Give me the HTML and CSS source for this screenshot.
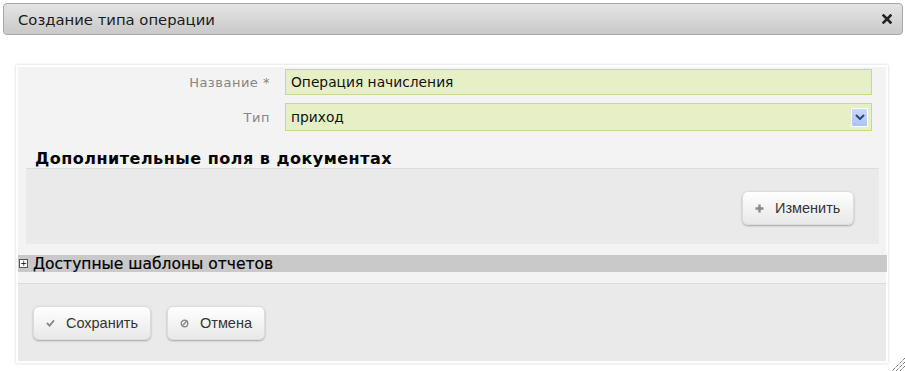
FILE: index.html
```html
<!DOCTYPE html>
<html lang="ru">
<head>
<meta charset="utf-8">
<link rel="stylesheet" href="styles.css">
</head>
<body>
<div class="titlebar">
  <span class="title">Создание типа операции</span>
  <svg class="close" width="10" height="10" viewBox="0 0 10 10"><path d="M1.5 1.5 L8.5 8.5 M8.5 1.5 L1.5 8.5" stroke="#222" stroke-width="2.6" stroke-linecap="square"/></svg>
</div>
<div class="panel">
  <div class="row row1">
    <label class="lbl">Название *</label>
    <div class="field">Операция начисления</div>
  </div>
  <div class="row row2">
    <label class="lbl">Тип</label>
    <div class="field select">приход
      <span class="arrow"><svg width="10" height="6" viewBox="0 0 10 6"><path d="M1 1 L5 5 L9 1" stroke="#33466b" stroke-width="2" fill="none"/></svg></span>
    </div>
  </div>
  <h2 class="heading">Дополнительные поля в документах</h2>
  <div class="extra">
    <button class="btn"><svg class="ico" width="9" height="9" viewBox="0 0 9 9"><path d="M4.5 0.5 V8.5 M0.5 4.5 H8.5" stroke="#8a8a8a" stroke-width="2.4"/></svg>Изменить</button>
  </div>
  <div class="bar"><span class="pbox">+</span>Доступные шаблоны отчетов</div>
  <div class="footer">
    <button class="btn"><svg class="ico" width="10" height="8" viewBox="0 0 10 8"><path d="M1 4 L4 7 L9 1" stroke="#888" stroke-width="2" fill="none"/></svg>Сохранить</button>
    <button class="btn"><svg class="ico" width="9" height="9" viewBox="0 0 9 9"><circle cx="4.5" cy="4.5" r="3.3" stroke="#888" stroke-width="1.4" fill="none"/><path d="M2.3 6.7 L6.7 2.3" stroke="#888" stroke-width="1.4"/></svg>Отмена</button>
  </div>
</div>
<svg class="grip" width="14" height="14" viewBox="0 0 14 14"><path d="M14 1 L1 14 M14 5 L5 14 M14 9 L9 14" stroke="#333" stroke-width="1" stroke-dasharray="1 1"/></svg>
</body>
</html>
```
FILE: styles.css
```css
html, body { margin: 0; padding: 0; background: #fff; }
body {
  font-family: "DejaVu Sans", Verdana, sans-serif;
  font-size: 13px;
  color: #000;
  width: 905px;
  height: 371px;
  position: relative;
  overflow: hidden;
}
.titlebar {
  margin: 3px 2px 0 3px;
  height: 30px;
  border: 1px solid #a8a8a8;
  border-radius: 4px;
  background: linear-gradient(#e4e4e4, #c9c9c9);
  display: flex;
  align-items: center;
  justify-content: space-between;
  padding: 0 10px 0 14px;
}
.title { font-size: 14.8px; color: #1a1a1a; }
.panel {
  margin: 30px 17px 0 16px;
  height: 294px;
  border: 2px solid #fff;
  box-shadow: 0 0 3px rgba(0,0,0,0.18);
  background: #f3f3f3;
  display: flex;
  flex-direction: column;
}
.row { display: flex; align-items: center; gap: 15px; padding-right: 14px; }
.row1 { margin-top: 2px; height: 26px; }
.row2 { margin-top: 8px; height: 28px; }
.lbl {
  width: 252px;
  text-align: right;
  color: #858585;
  font-size: 13px;
  letter-spacing: 0.5px;
}
.field {
  flex: 1;
  height: 100%;
  box-sizing: border-box;
  border: 1px solid #c7d98c;
  background: #e6efc6;
  display: flex;
  align-items: center;
  padding-left: 5px;
  font-size: 13.8px;
  color: #111;
}
.select { justify-content: space-between; padding-right: 3px; }
.arrow {
  width: 15px;
  height: 17px;
  border: 1px solid #fff;
  background: linear-gradient(#c9d9ff, #aac4f6);
  display: flex;
  align-items: center;
  justify-content: center;
}
.heading {
  margin: 18px 0 0 17px;
  font-size: 16px;
  letter-spacing: 0.5px;
  font-weight: bold;
  line-height: 19px;
  height: 19px;
}
.extra {
  margin: 0 7px 0 8px;
  height: 76px;
  border-top: 1px solid #dcdcdc;
  background: #eaeaea;
  display: flex;
  justify-content: flex-end;
  align-items: flex-start;
  padding: 22px 25px 0 0;
  box-sizing: border-box;
}
.btn {
  height: 34px;
  box-sizing: border-box;
  border: 1px solid #dcdcdc;
  border-radius: 6px;
  background: linear-gradient(#ffffff, #e8e8e8);
  box-shadow: 0 1px 2px rgba(0,0,0,0.3);
  font-family: "Liberation Sans", Arial, sans-serif;
  font-size: 14.5px;
  color: #333;
  padding: 0 12px 0 12px;
  display: flex;
  align-items: center;
  gap: 11px;
}
.extra .btn { width: 112px; }
.bar {
  margin-top: 11px;
  margin-right: -1px;
  height: 17px;
  background: #c9c9c9;
  display: flex;
  align-items: center;
  font-size: 15.5px;
  color: #000;
  -webkit-text-stroke: 0.2px #000;
}
.pbox {
  width: 7px;
  height: 7px;
  border: 1px solid #555;
  background: #fff;
  margin: 0 5px 0 1px;
  font-size: 8px;
  line-height: 7px;
  text-align: center;
  -webkit-text-stroke: 0;
  color: #000;
}
.footer {
  margin-top: 11px;
  flex: 1;
  border-top: 1px solid #dcdcdc;
  background: #eaeaea;
  display: flex;
  align-items: flex-start;
  gap: 16px;
  padding: 22px 0 0 15px;
}
.footer .btn:first-child { width: 118px; }
.footer .btn:last-child { width: 98px; }
.grip { position: absolute; right: 0; bottom: 0; }
```
